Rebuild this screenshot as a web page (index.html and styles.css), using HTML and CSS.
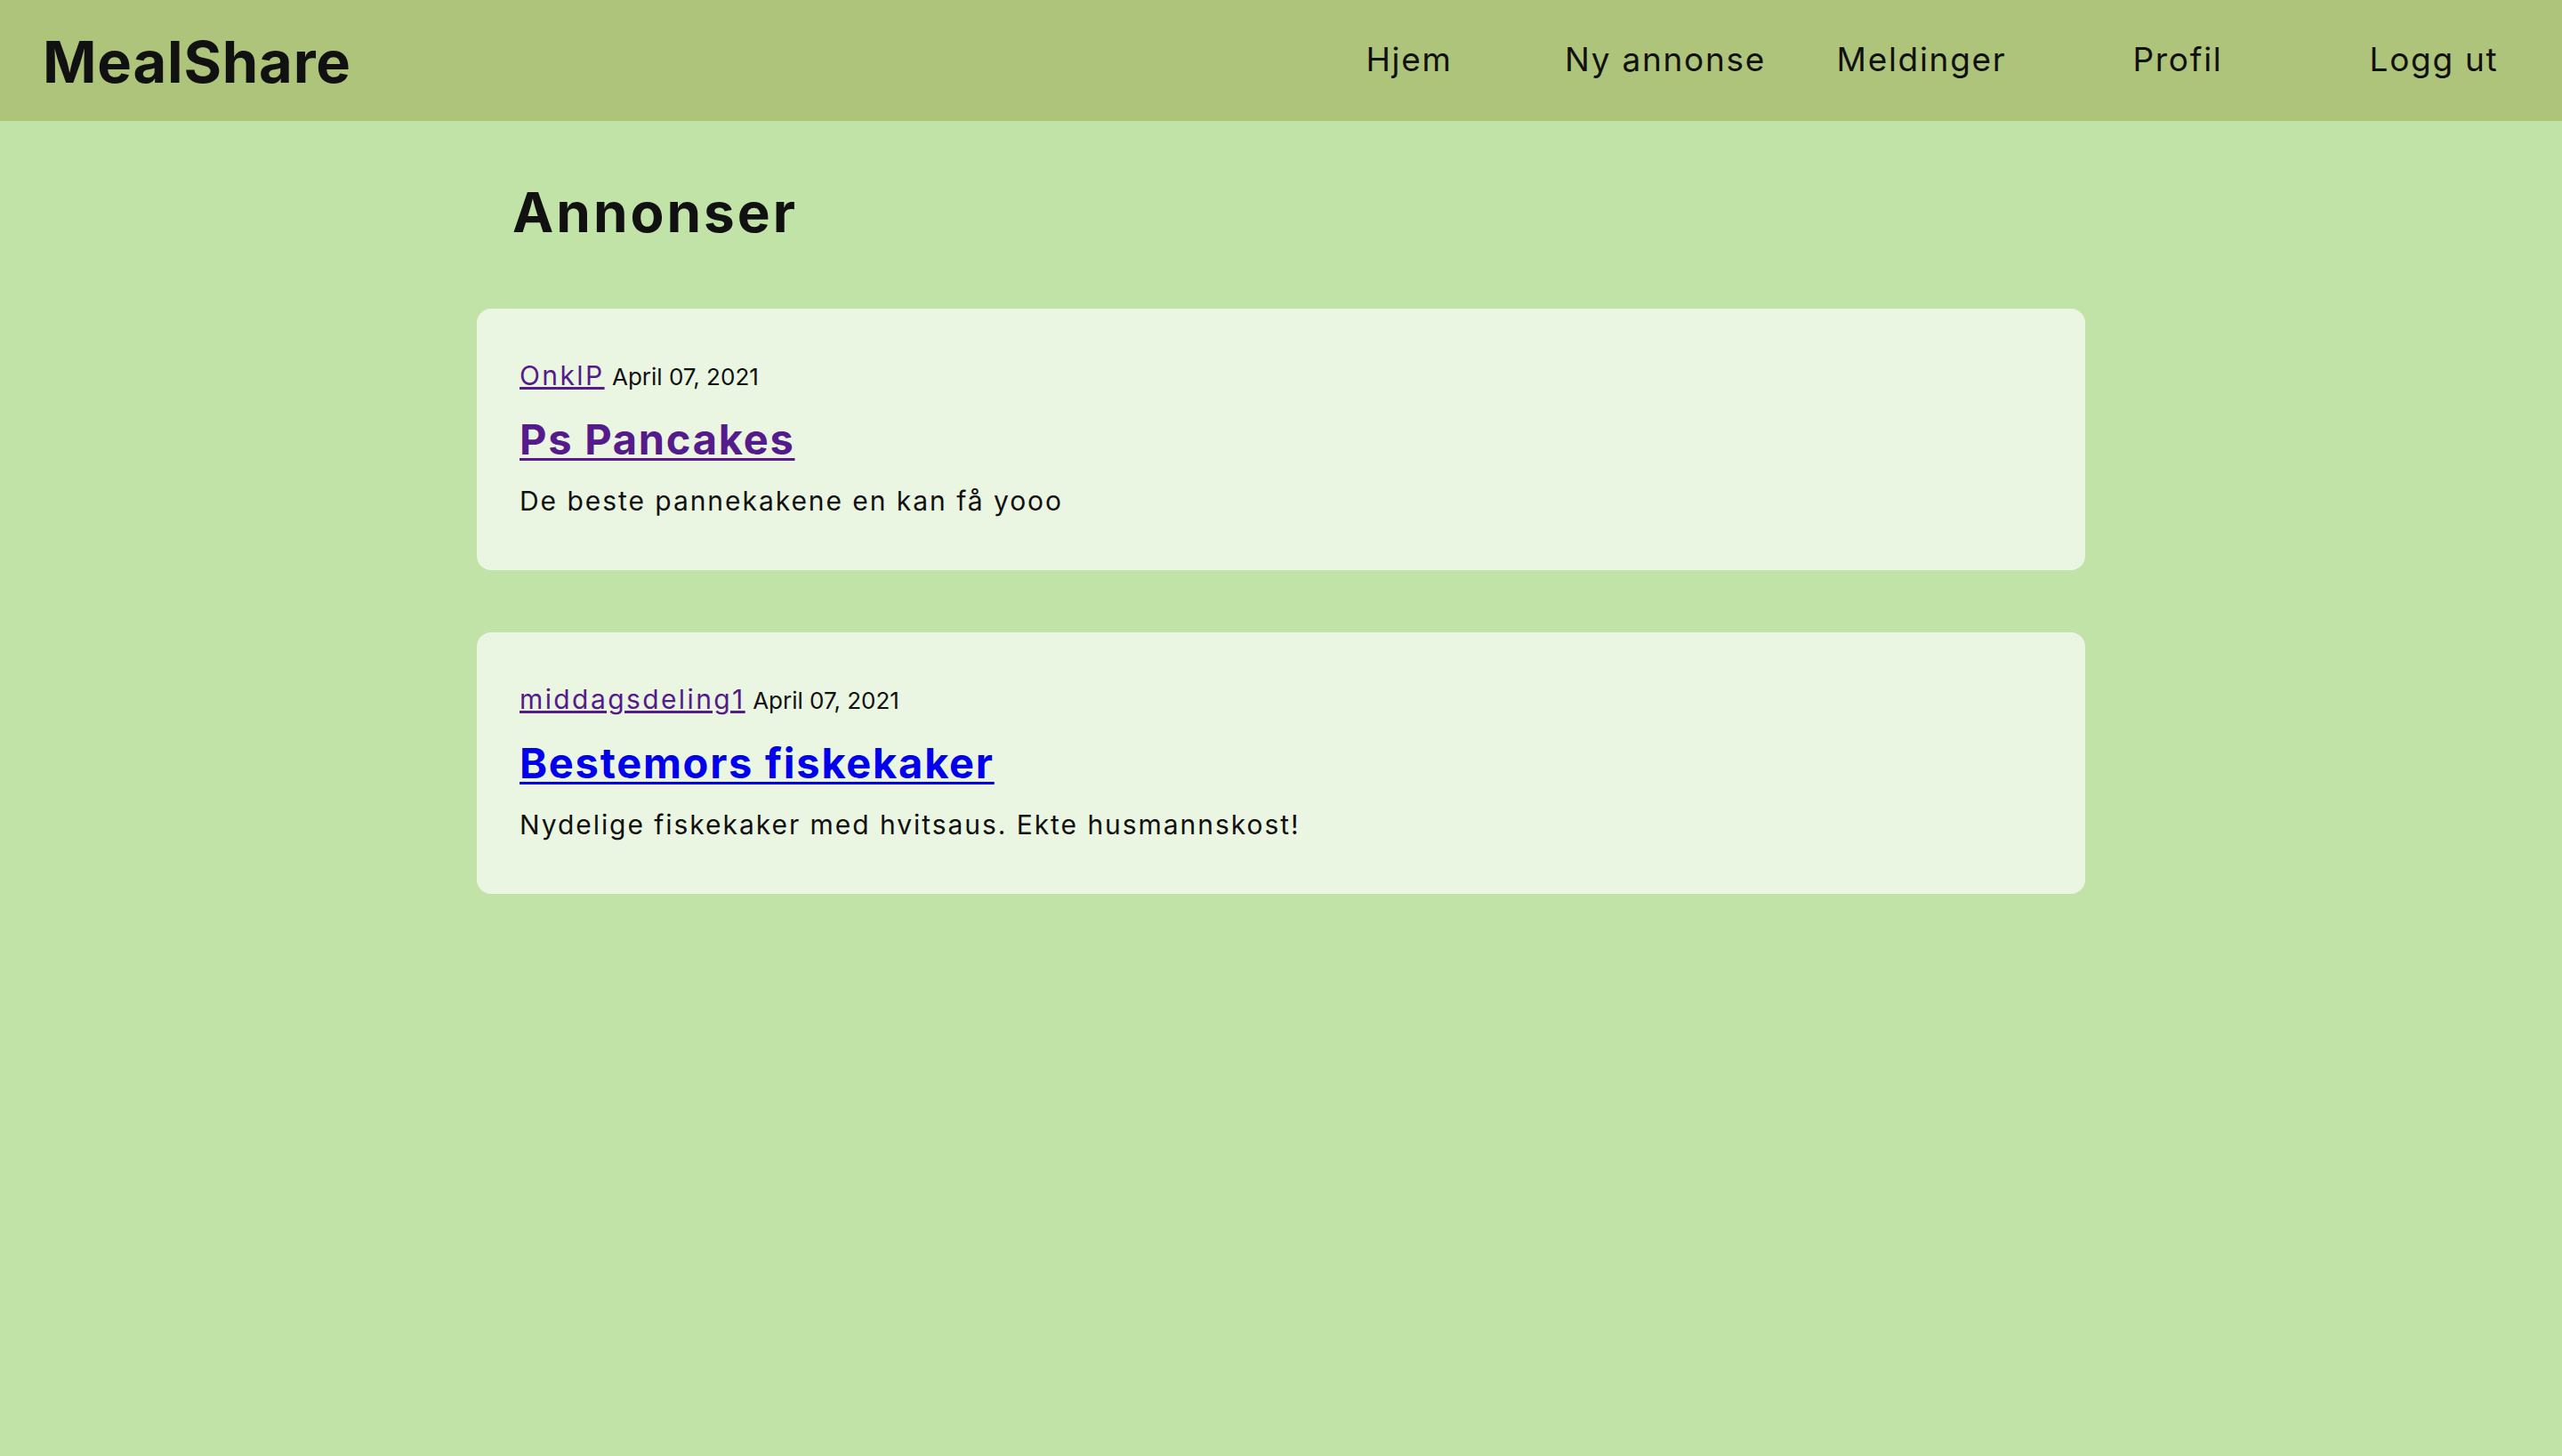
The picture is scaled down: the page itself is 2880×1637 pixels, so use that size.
FILE: index.html
```html
<!DOCTYPE html>
<html lang="no">
<head>
<meta charset="utf-8">
<title>MealShare</title>
<link rel="stylesheet" href="styles.css">
</head>
<body>
<header class="topbar">
  <a class="brand" href="#">MealShare</a>
  <nav class="nav">
    <a class="nav-link" href="#">Hjem</a>
    <a class="nav-link" href="#">Ny annonse</a>
    <a class="nav-link" href="#">Meldinger</a>
    <a class="nav-link" href="#">Profil</a>
    <a class="nav-link" href="#">Logg ut</a>
  </nav>
</header>
<main class="content">
  <h1 class="page-title">Annonser</h1>
  <article class="card">
    <div class="meta"><a class="author visited" href="#">OnklP</a> <span class="date">April 07, 2021</span></div>
    <h2 class="card-title"><a class="visited" href="#">Ps Pancakes</a></h2>
    <p class="card-text">De beste pannekakene en kan få yooo</p>
  </article>
  <article class="card">
    <div class="meta"><a class="author visited" href="#">middagsdeling1</a> <span class="date">April 07, 2021</span></div>
    <h2 class="card-title"><a class="unvisited" href="#">Bestemors fiskekaker</a></h2>
    <p class="card-text">Nydelige fiskekaker med hvitsaus. Ekte husmannskost!</p>
  </article>
</main>
</body>
</html>
```
FILE: styles.css
```css
html, body {
  margin: 0;
  padding: 0;
}
body {
  background: #c2e3a8;
  color: #111111;
  font-family: "Inter", "Liberation Sans", sans-serif;
  min-height: 100vh;
}
.topbar {
  display: flex;
  align-items: center;
  justify-content: space-between;
  height: 136px;
  background: #aec47a;
  padding-left: 48px;
}
.brand {
  font-size: 65px;
  font-weight: 700;
  line-height: 1;
  color: #111111;
  text-decoration: none;
  letter-spacing: 0.8px;
  padding-top: 2px;
}
.nav {
  display: flex;
  width: 1440px;
}
.nav-link {
  width: 288px;
  text-align: center;
  font-size: 37px;
  line-height: 1;
  letter-spacing: 1.7px;
  color: #111111;
  text-decoration: none;
  padding-bottom: 3px;
}
.content {
  width: 1808px;
  margin: 0 auto;
}
.page-title {
  margin: 72px 0 77px;
  padding-left: 40px;
  font-size: 62px;
  line-height: 1;
  font-weight: 700;
  letter-spacing: 3px;
}
.card {
  background: #eaf5e2;
  border-radius: 16px;
  padding: 57px 48px 60px;
  margin-bottom: 70px;
  height: 294px;
  box-sizing: border-box;
}
.meta {
  height: 36px;
  font-size: 30px;
  line-height: 36px;
  white-space: nowrap;
}
.author {
  font-size: 30px;
  letter-spacing: 2.4px;
}
.date {
  font-size: 26px;
  color: #111111;
}
.visited {
  color: #551a8b;
}
.unvisited {
  color: #0000ee;
}
.card-title {
  margin: 30px 0 0;
  font-size: 47px;
  line-height: 1;
  font-weight: 700;
  letter-spacing: 1.75px;
}
.card-title a {
  text-decoration-thickness: 3px;
  text-underline-offset: 4px;
}
.card-text {
  margin: 28px 0 0;
  font-size: 30px;
  line-height: 36px;
  letter-spacing: 1.95px;
}
```
